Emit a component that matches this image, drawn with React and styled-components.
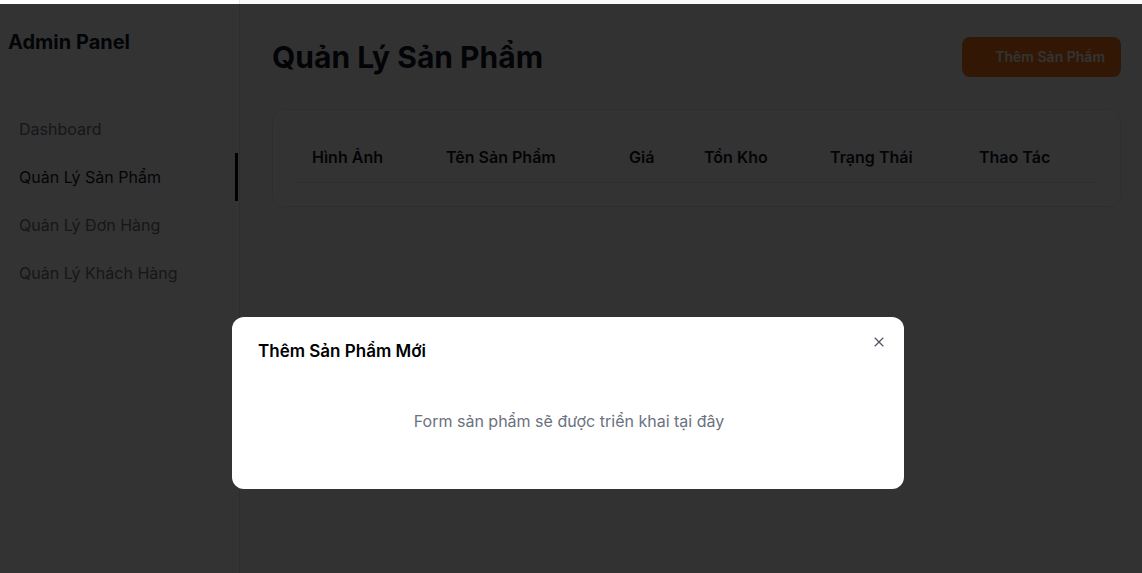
import React, { useState } from "react";
import styled, { createGlobalStyle } from "styled-components";
import { X } from "lucide-react";

const GlobalStyle = createGlobalStyle`
  * { box-sizing: border-box; }
  body {
    margin: 0;
    font-family: Inter, "Noto Sans", sans-serif;
    background: #f9fafb;
    color: #111827;
  }
`;

const Layout = styled.div`
  display: flex;
  min-height: 573px;
`;

const Sidebar = styled.aside`
  width: 240px;
  flex-shrink: 0;
  background: #fff;
  border-right: 1px solid #e5e7eb;
  padding-top: 28px;
`;

const Brand = styled.h2`
  margin: 0 0 49px 8px;
  font-size: 20px;
  line-height: 28px;
  font-weight: 700;
  color: #111827;
`;

const NavItem = styled.div`
  padding: 12px 19px;
  font-size: 16px;
  line-height: 24px;
  color: ${(p) => (p.$active ? "#111827" : "#6b7280")};
  border-right: 3px solid ${(p) => (p.$active ? "#000" : "transparent")};
  margin-right: 1px;
  cursor: pointer;
`;

const Main = styled.main`
  flex: 1;
  padding: 32px 22px 32px 32px;
`;

const Header = styled.div`
  display: flex;
  align-items: center;
  justify-content: space-between;
  height: 49px;
  margin-bottom: 28px;
`;

const Title = styled.h1`
  margin: 0;
  font-size: 30px;
  line-height: 36px;
  font-weight: 700;
  color: #111827;
`;

const AddButton = styled.button`
  display: flex;
  align-items: center;
  gap: 8px;
  height: 40px;
  padding: 0 16px;
  border: none;
  border-radius: 8px;
  background: #f97316;
  color: #fff;
  font-family: inherit;
  font-size: 14px;
  font-weight: 600;
  cursor: pointer;
`;

const IconSlot = styled.span`
  width: 9px;
  height: 16px;
`;

const Card = styled.div`
  margin-top: 1px;
  background: #fff;
  border: 1px solid #e5e7eb;
  border-radius: 12px;
  padding: 23px;
`;

const Table = styled.table`
  width: 100%;
  border-collapse: collapse;
  table-layout: fixed;
`;

const Th = styled.th`
  text-align: left;
  padding: 15px 16px;
  font-size: 16px;
  line-height: 19px;
  font-weight: 600;
  color: #111827;
  border-bottom: 1px solid #e5e7eb;
`;

const Overlay = styled.div`
  position: fixed;
  top: 4px;
  left: 0;
  right: 0;
  bottom: 0;
  background: rgba(0, 0, 0, 0.8);
  display: flex;
  justify-content: center;
  align-items: flex-start;
  padding: 313px 6px 0 0;
`;

const Modal = styled.div`
  position: relative;
  width: 672px;
  background: #fff;
  border-radius: 12px;
  padding: 20px 24px 24px 26px;
`;

const ModalTitle = styled.h3`
  margin: 0 0 12px;
  font-size: 17px;
  line-height: 28px;
  font-weight: 600;
  color: #000;
`;

const CloseButton = styled.button`
  position: absolute;
  top: 17px;
  right: 17px;
  width: 16px;
  height: 16px;
  padding: 0;
  border: none;
  background: none;
  color: #4b5563;
  display: flex;
  cursor: pointer;
`;

const ModalBody = styled.p`
  margin: 0;
  padding: 32px 0;
  text-align: center;
  font-size: 16px;
  line-height: 24px;
  color: #6b7280;
`;

const navItems = [
  "Dashboard",
  "Quản Lý Sản Phẩm",
  "Quản Lý Đơn Hàng",
  "Quản Lý Khách Hàng",
];

const columns = [
  { label: "Hình Ảnh", width: 134 },
  { label: "Tên Sản Phẩm", width: 183 },
  { label: "Giá", width: 75 },
  { label: "Tồn Kho", width: 126 },
  { label: "Trạng Thái", width: 149 },
  { label: "Thao Tác", width: 134 },
];

export default function App() {
  const [open, setOpen] = useState(true);
  return (
    <>
      <GlobalStyle />
      <Layout>
        <Sidebar>
          <Brand>Admin Panel</Brand>
          {navItems.map((item, i) => (
            <NavItem key={item} $active={i === 1}>
              {item}
            </NavItem>
          ))}
        </Sidebar>
        <Main>
          <Header>
            <Title>Quản Lý Sản Phẩm</Title>
            <AddButton onClick={() => setOpen(true)}>
              <IconSlot />
              Thêm Sản Phẩm
            </AddButton>
          </Header>
          <Card>
            <Table>
              <colgroup>
                {columns.map((c) => (
                  <col key={c.label} style={{ width: c.width }} />
                ))}
              </colgroup>
              <thead>
                <tr>
                  {columns.map((c) => (
                    <Th key={c.label}>{c.label}</Th>
                  ))}
                </tr>
              </thead>
            </Table>
          </Card>
        </Main>
      </Layout>
      {open && (
        <Overlay>
          <Modal>
            <ModalTitle>Thêm Sản Phẩm Mới</ModalTitle>
            <CloseButton onClick={() => setOpen(false)}>
              <X size={16} strokeWidth={1.75} />
            </CloseButton>
            <ModalBody>Form sản phẩm sẽ được triển khai tại đây</ModalBody>
          </Modal>
        </Overlay>
      )}
    </>
  );
}
